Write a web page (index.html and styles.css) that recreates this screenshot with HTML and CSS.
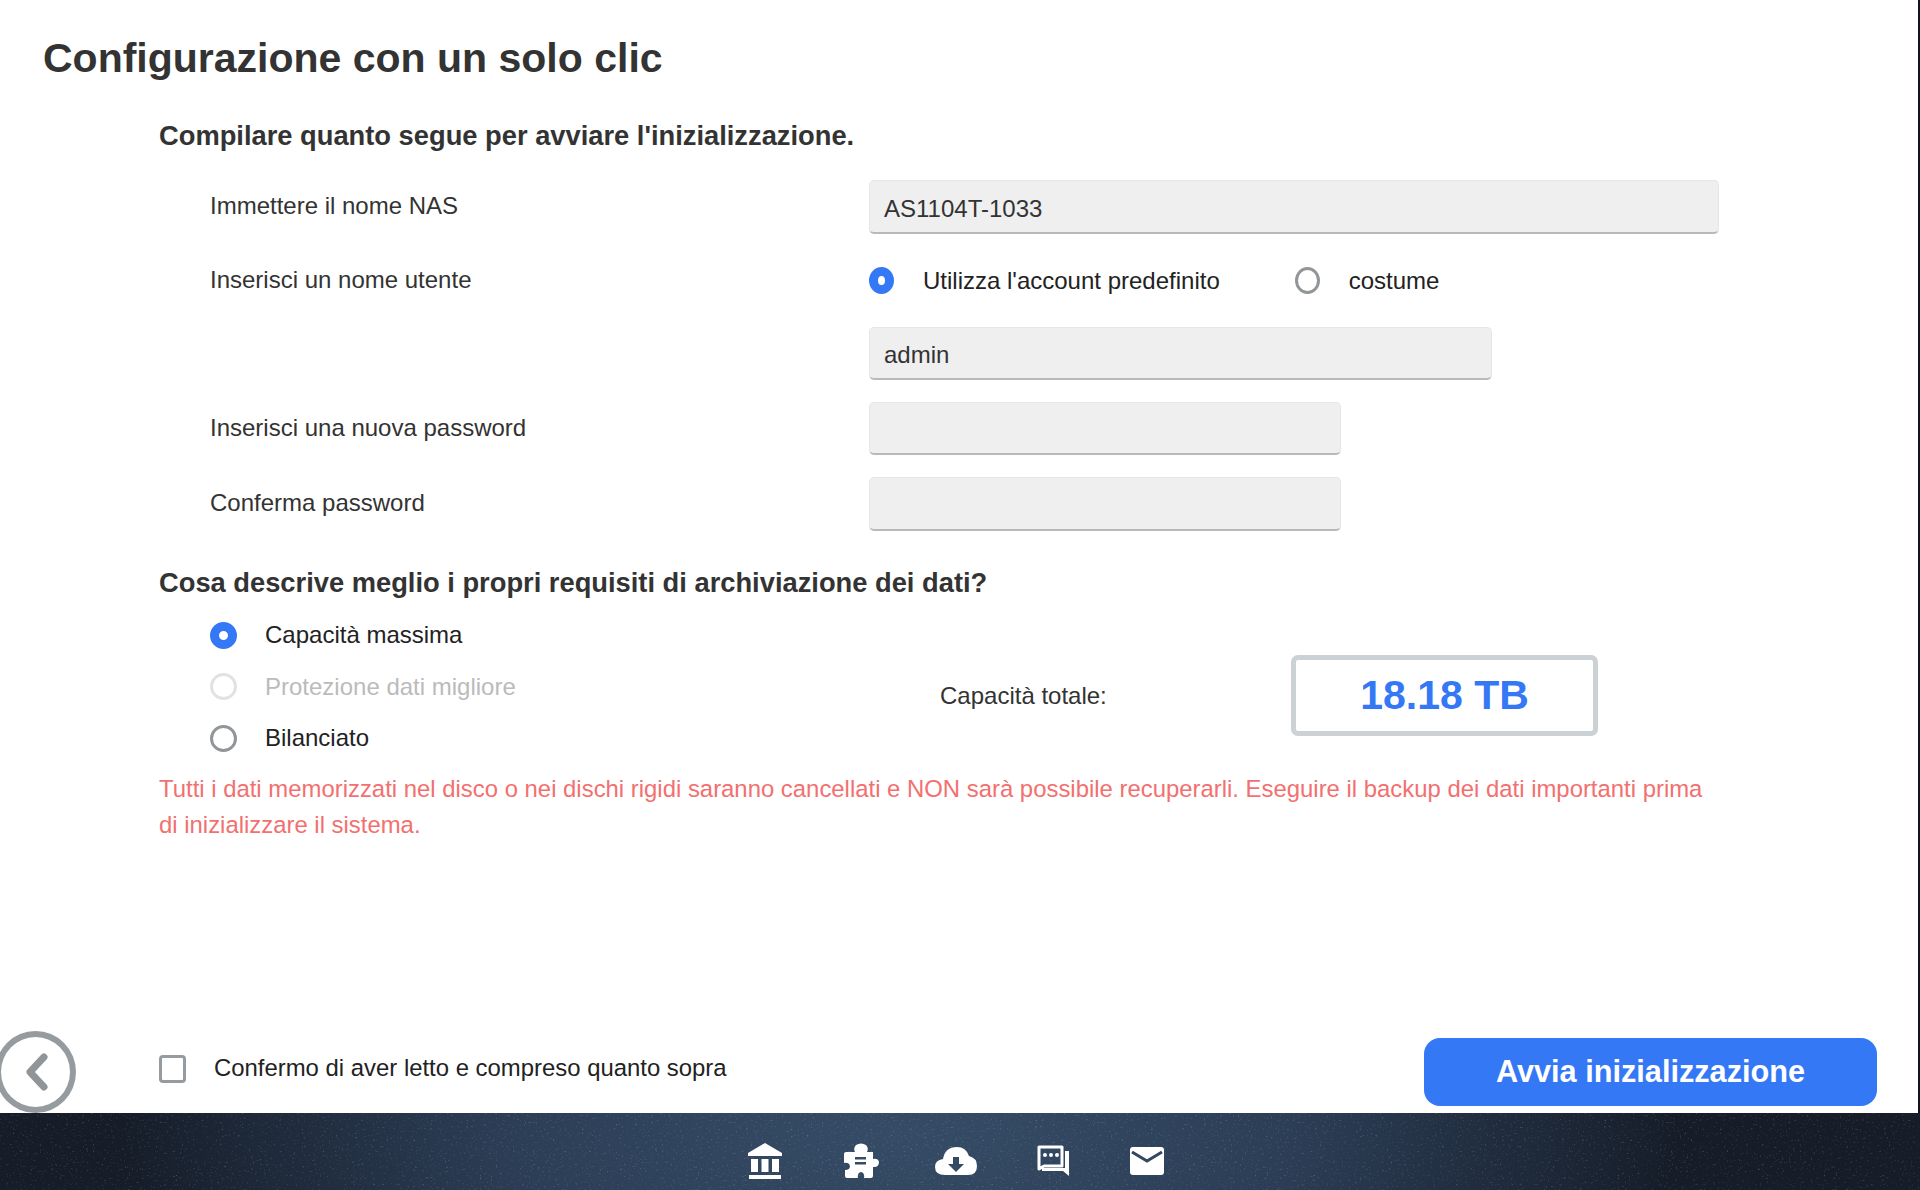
FILE: index.html
```html
<!DOCTYPE html>
<html lang="it">
<head>
  <meta charset="UTF-8">
  <title>Configurazione con un solo clic</title>
  <link rel="stylesheet" href="styles.css">
</head>
<body>
  <svg class="defs" width="0" height="0" aria-hidden="true">
    <filter id="speckle">
      <feTurbulence type="fractalNoise" baseFrequency="0.45" numOctaves="3" seed="7"/>
      <feColorMatrix values="0 0 0 0 1  0 0 0 0 1  0 0 0 0 1  0 0 0 3.2 -2.05"/>
    </filter>
  </svg>
  <div class="page">
    <main class="panel">
      <h1>Configurazione con un solo clic</h1>
      <h2>Compilare quanto segue per avviare l'inizializzazione.</h2>

      <div class="form">
        <label class="form-label">Immettere il nome NAS</label>
        <input class="field field-full" type="text" value="AS1104T-1033">

        <label class="form-label">Inserisci un nome utente</label>
        <div class="account-options">
          <span class="radio radio-narrow checked"></span>
          <span class="option-text text-account">Utilizza l'account predefinito</span>
          <span class="radio radio-narrow"></span>
          <span class="option-text">costume</span>
        </div>

        <span></span>
        <input class="field field-mid" type="text" value="admin">

        <label class="form-label">Inserisci una nuova password</label>
        <input class="field field-short" type="text">

        <label class="form-label">Conferma password</label>
        <input class="field field-short" type="text">
      </div>

      <h2 class="storage-title">Cosa descrive meglio i propri requisiti di archiviazione dei dati?</h2>

      <div class="storage">
        <div class="storage-options">
          <div class="storage-option">
            <span class="radio checked"></span>
            <span class="option-text">Capacità massima</span>
          </div>
          <div class="storage-option disabled">
            <span class="radio"></span>
            <span class="option-text">Protezione dati migliore</span>
          </div>
          <div class="storage-option">
            <span class="radio"></span>
            <span class="option-text">Bilanciato</span>
          </div>
        </div>
        <div class="capacity-label">Capacità totale:</div>
        <div class="capacity-value">18.18 TB</div>
      </div>

      <p class="warning">Tutti i dati memorizzati nel disco o nei dischi rigidi saranno cancellati e NON sarà possibile recuperarli. Eseguire il backup dei dati importanti prima di inizializzare il sistema.</p>

      <div class="bottom">
        <button class="back" type="button" aria-label="Indietro">
          <svg width="32" height="42" viewBox="0 0 32 42"><path d="M24 6 L10 21 L24 36" fill="none" stroke="#8f9599" stroke-width="7" stroke-linecap="round" stroke-linejoin="round"/></svg>
        </button>
        <span class="checkbox"></span>
        <span class="confirm-text">Confermo di aver letto e compreso quanto sopra</span>
        <button class="start" type="button">Avvia inizializzazione</button>
      </div>
    </main>

    <footer class="dock">
      <svg class="dock-noise" width="100%" height="100%"><rect width="100%" height="100%" filter="url(#speckle)"/></svg>
      <!-- bank -->
      <svg class="dock-icon" width="36" height="36" viewBox="0 0 36 36"><path d="M18 0 L35 10 V13 H1 V10 Z" fill="#fff"/><path d="M4 16h7v13H4zM14.500 16h7v13h-7zM25 16h7v13h-7z" fill="#fff"/><rect x="2" y="32" width="32" height="4" fill="#fff"/></svg>
      <!-- puzzle -->
      <svg class="dock-icon icon-puzzle" width="36" height="36" viewBox="0 0 36 36"><path fill-rule="evenodd" d="M13 2 Q18 -1 23 2 Q26 5 24 9 H30 V16 Q35 15 36 19 Q36 24 31 24 H30 V33 Q30 35 28 35 H21 Q22 30 18 29 Q14 30 15 35 H4 Q2 35 2 33 V27 Q7 27 7 23 Q6 19 1 20 V11 Q1 9 3 9 H12 Q10 5 13 2 Z M12 14 V16.500 H23 V14 Z M12 19 V21.500 H23 V19 Z" fill="#fff"/></svg>
      <!-- cloud download -->
      <svg class="dock-icon" width="42" height="30" viewBox="0 0 42 30"><path fill-rule="evenodd" d="M10 29 Q0 29 0 21 Q0 14 8 13 Q10 1 22 1 Q31 1 34 10 Q42 12 42 20 Q42 29 33 29 Z M18 11 V18 H13 L21 26 L29 18 H24 V11 Z" fill="#fff"/></svg>
      <!-- chat -->
      <svg class="dock-icon" width="36" height="32" viewBox="0 0 36 32"><path d="M4 2 H27 V21 H9 L4 24 Z" fill="none" stroke="#fff" stroke-width="3" stroke-linejoin="round"/><path d="M30 6 H34 V31 L28 26 H7 V23 H30 Z" fill="#fff"/><circle cx="10" cy="10" r="2" fill="#fff"/><circle cx="16" cy="10" r="2" fill="#fff"/><circle cx="22" cy="10" r="2" fill="#fff"/></svg>
      <!-- mail -->
      <svg class="dock-icon" width="36" height="30" viewBox="0 0 36 30"><rect x="1" y="1" width="34" height="28" rx="3" fill="#fff"/><path d="M3 6 L18 15 L33 6" fill="none" stroke="#33475f" stroke-width="3"/></svg>
    </footer>
  </div>
</body>
</html>
```

FILE: styles.css
```css
* {
  box-sizing: border-box;
}
html, body {
  margin: 0;
  padding: 0;
}
body {
  font-family: "Liberation Sans", Arial, sans-serif;
  background: #10151e;
  color: #333;
}
.defs {
  display: block;
}
.page {
  display: flex;
  flex-direction: column;
  width: 1920px;
  height: 1190px;
  overflow: hidden;
}
.panel {
  flex: 1;
  display: flex;
  flex-direction: column;
  margin-right: 2px;
  padding-left: 159px;
  background: #fff;
}
h1 {
  margin: 35px 0 0 -116px;
  font-size: 41px;
  line-height: 46px;
  color: #333;
}
h2 {
  margin: 40px 0 0;
  font-size: 27.3px;
  line-height: 30px;
  color: #333;
}
.form {
  display: grid;
  grid-template-columns: 659px 850px;
  grid-template-rows: 54px 49px 53px 53px 54px;
  row-gap: 22px;
  align-items: center;
  margin: 29px 0 0 51px;
}
.form-label {
  padding-bottom: 2px;
  font-size: 24px;
}
.field {
  height: 100%;
  padding: 4px 14px 0;
  border: 1px solid #e6e6e6;
  border-bottom: 2px solid #b9b9b9;
  border-radius: 5px;
  background: #efefef;
  font: 24px "Liberation Sans", Arial, sans-serif;
  color: #333;
}
.field-full {
  width: 850px;
}
.field-mid {
  width: 623px;
}
.field-short {
  width: 472px;
}
.account-options {
  display: flex;
  align-items: center;
}
.option-text {
  font-size: 24px;
  color: #222;
}
.account-options .radio {
  margin-right: 29px;
}
.text-account {
  margin-right: 75px;
}
.radio {
  flex: none;
  width: 27px;
  height: 27px;
  border: 3px solid #929699;
  border-radius: 50%;
  background: #fff;
}
.radio-narrow {
  width: 25px;
}
.radio.checked {
  border: 9px solid #3478f6;
}
.storage-title {
  margin-top: 36.500px;
}
.storage {
  display: flex;
  align-items: center;
  margin: 23.500px 0 0 51px;
}
.storage-options {
  display: flex;
  flex-direction: column;
  gap: 23.5px;
  width: 730px;
}
.storage-option {
  display: flex;
  align-items: center;
  gap: 28px;
  height: 28px;
}
.disabled .radio {
  border-color: #e2e2e2;
}
.disabled .option-text {
  color: #bbb;
}
.capacity-label {
  width: 351px;
  margin-top: 18px;
  font-size: 24px;
}
.capacity-value {
  width: 307px;
  height: 81px;
  margin-top: 18px;
  border: 5px solid #ccd1d5;
  border-radius: 7px;
  font-size: 41px;
  font-weight: bold;
  line-height: 71px;
  text-align: center;
  color: #3478f6;
}
.warning {
  width: 1560px;
  margin: 19px 0 0;
  font-size: 23.9px;
  line-height: 36px;
  color: #f2706f;
}
.bottom {
  display: flex;
  align-items: center;
  margin: auto 0 0 -164px;
}
.back {
  display: flex;
  align-items: center;
  justify-content: center;
  flex: none;
  width: 81px;
  height: 82px;
  margin: 0 83px 0 0;
  padding: 0;
  border: 6px solid #969b9f;
  border-radius: 50%;
  background: #fff;
}
.checkbox {
  flex: none;
  width: 27px;
  height: 28px;
  margin: 0 28px 7px 0;
  border: 3px solid #969b9f;
  border-radius: 4px;
}
.confirm-text {
  margin-bottom: 8px;
  font-size: 23.9px;
  color: #222;
}
.start {
  width: 453px;
  height: 68px;
  margin: 0 41px 0 auto;
  border: 0;
  border-radius: 16px;
  background: #3478f6;
  color: #fff;
  font: bold 30.7px "Liberation Sans", Arial, sans-serif;
}
.dock {
  position: relative;
  display: flex;
  align-items: center;
  justify-content: center;
  flex: none;
  gap: 58px;
  height: 77px;
  padding: 18px 9px 0 0;
  background: radial-gradient(ellipse 780px 300px at 900px 20px, #364c66 0%, #2c3e56 50%, #161d29 100%);
}
.dock-noise {
  position: absolute;
  top: 0;
  left: 0;
  opacity: 0.22;
}
.dock-icon {
  position: relative;
}
.icon-puzzle {
  margin: 0 -2px 0 2px;
}
```
